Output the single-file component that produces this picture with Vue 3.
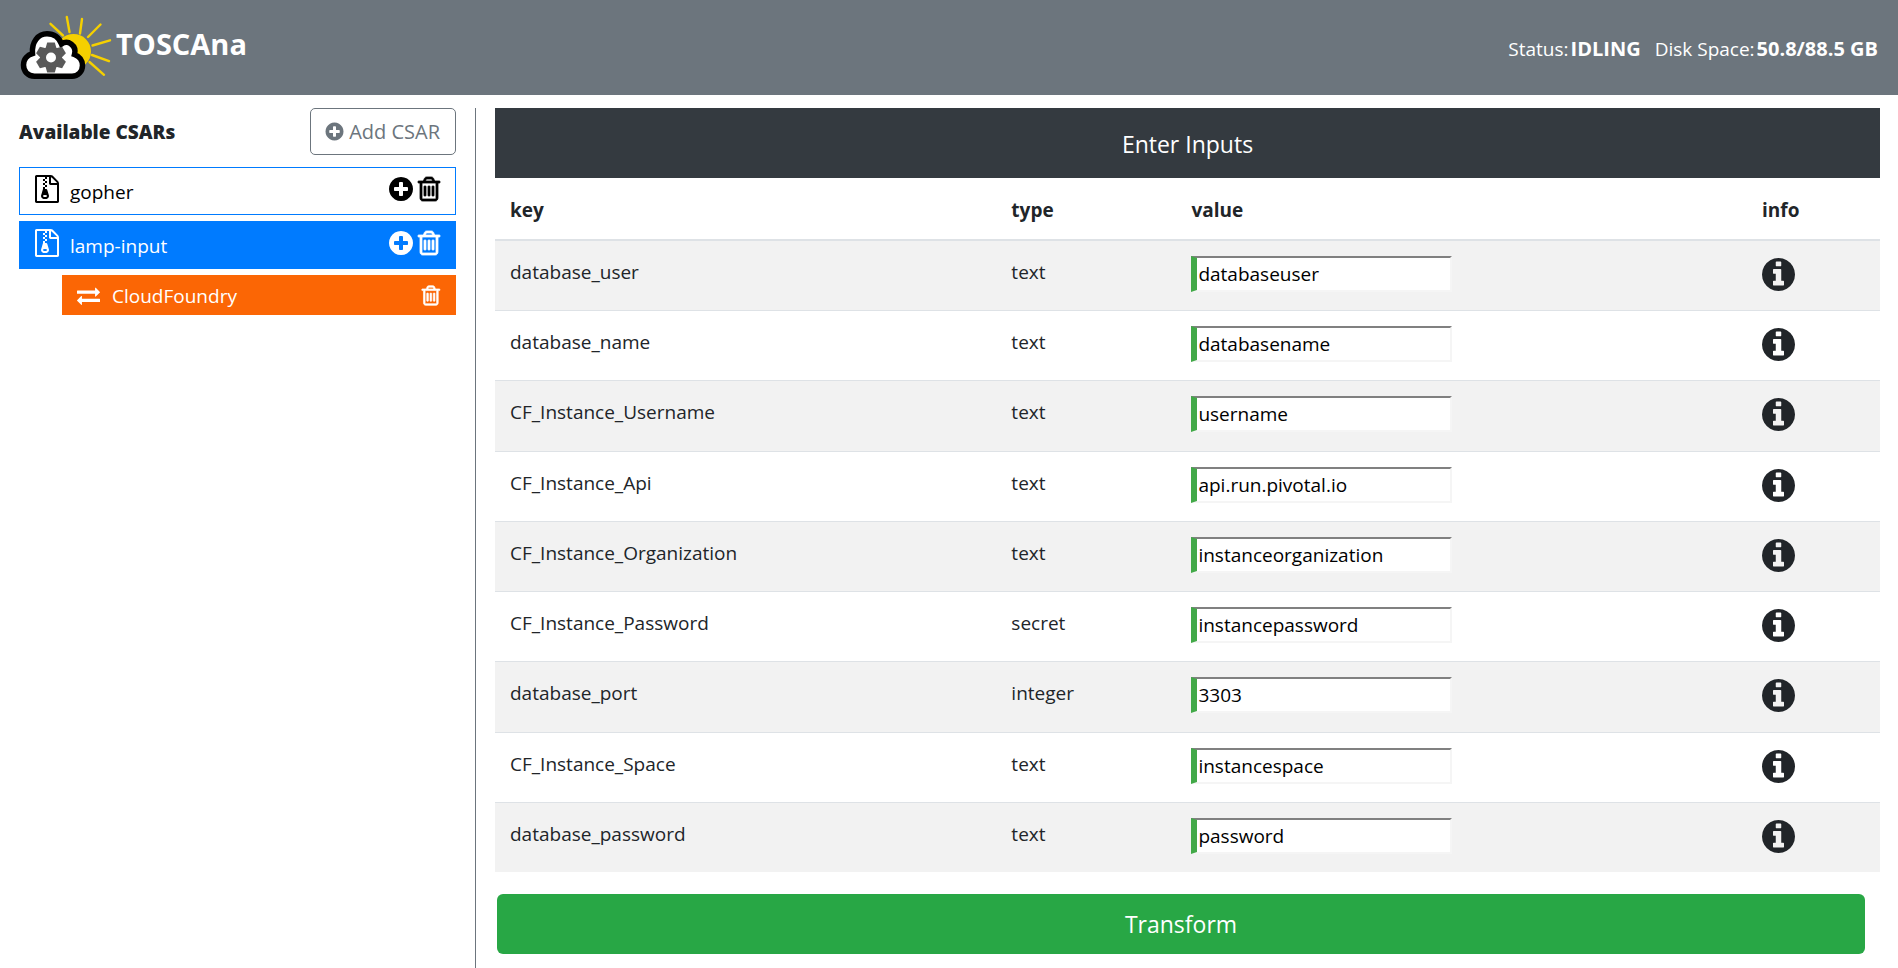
<script setup>
import { ref } from 'vue'

const icons = {
  plus: 'M1344 960v-128q0-26-19-45t-45-19h-256v-256q0-26-19-45t-45-19h-128q-26 0-45 19t-19 45v256h-256q-26 0-45 19t-19 45v128q0 26 19 45t45 19h256v256q0 26 19 45t45 19h128q26 0 45-19t19-45v-256h256q26 0 45-19t19-45zm320-64q0 209-103 385.5t-279.5 279.5-385.5 103-385.5-103-279.5-279.5-103-385.5 103-385.5 279.5-279.5 385.5-103 385.5 103 279.5 279.5 103 385.5z',
  info: 'M1152 1376v-160q0-14-9-23t-23-9h-96v-512q0-14-9-23t-23-9h-320q-14 0-23 9t-9 23v160q0 14 9 23t23 9h96v320h-96q-14 0-23 9t-9 23v160q0 14 9 23t23 9h448q14 0 23-9t9-23zm-128-896v-160q0-14-9-23t-23-9h-192q-14 0-23 9t-9 23v160q0 14 9 23t23 9h192q14 0 23-9t9-23zm640 416q0 209-103 385.5t-279.5 279.5-385.5 103-385.5-103-279.5-279.5-103-385.5 103-385.5 279.5-279.5 385.5-103 385.5 103 279.5 279.5 103 385.5z',
  trash: 'M704 736v576q0 14-9 23t-23 9h-64q-14 0-23-9t-9-23v-576q0-14 9-23t23-9h64q14 0 23 9t9 23zm256 0v576q0 14-9 23t-23 9h-64q-14 0-23-9t-9-23v-576q0-14 9-23t23-9h64q14 0 23 9t9 23zm256 0v576q0 14-9 23t-23 9h-64q-14 0-23-9t-9-23v-576q0-14 9-23t23-9h64q14 0 23 9t9 23zm128 724v-948h-896v948q0 22 7 40.5t14.5 27 10.5 8.5h832q3 0 10.5-8.5t14.5-27 7-40.5zm-672-1076h448l-48-117q-7-9-17-11h-317q-10 2-17 11zm928 32v64q0 14-9 23t-23 9h-96v948q0 83-47 143.5t-113 60.5h-832q-66 0-113-58.5t-47-141.5v-952h-96q-14 0-23-9t-9-23v-64q0-14 9-23t23-9h309l70-167q15-37 54-63t79-26h320q40 0 79 26t54 63l70 167h309q14 0 23 9t9 23z',
  archive: 'M768 384v-128h-128v128h128zm128 128v-128h-128v128h128zm-128 128v-128h-128v128h128zm128 128v-128h-128v128h128zm700-388q28 28 48 76t20 88v1152q0 40-28 68t-68 28h-1344q-40 0-68-28t-28-68v-1600q0-40 28-68t68-28h896q40 0 88 20t76 48zm-444-244v376h376q-10-29-22-41l-313-313q-12-12-41-22zm384 1528v-1024h-416q-40 0-68-28t-28-68v-416h-128v128h-128v-128h-512v1536h1280zm-627-721l107 349q8 27 8 52 0 83-72.5 137.5t-183.5 54.5-183.5-54.5-72.5-137.5q0-25 8-52 21-63 120-396v-128h128v128h79q22 0 39 13t23 34zm-141 465q53 0 90.5-19t37.5-45-37.5-45-90.5-19-90.5 19-37.5 45 37.5 45 90.5 19z',
  exchange: 'M1792 1184v192q0 13-9.5 22.5t-22.5 9.5h-1376v192q0 13-9.5 22.5t-22.5 9.5q-12 0-24-10l-319-320q-9-9-9-22 0-14 9-23l320-320q9-9 23-9 13 0 22.5 9.5t9.5 22.5v192h1376q13 0 22.5 9.5t9.5 22.5zm0-544q0 14-9 23l-320 320q-9 9-23 9-13 0-22.5-9.5t-9.5-22.5v-192h-1376q-13 0-22.5-9.5t-9.5-22.5v-192q0-13 9.5-22.5t22.5-9.5h1376v-192q0-14 9-23t23-9q12 0 24 10l319 319q9 9 9 23z'
}

const csars = [
  { name: 'gopher', active: false, platforms: [] },
  { name: 'lamp-input', active: true, platforms: ['CloudFoundry'] }
]

const inputs = ref([
  { key: 'database_user', type: 'text', value: 'databaseuser' },
  { key: 'database_name', type: 'text', value: 'databasename' },
  { key: 'CF_Instance_Username', type: 'text', value: 'username' },
  { key: 'CF_Instance_Api', type: 'text', value: 'api.run.pivotal.io' },
  { key: 'CF_Instance_Organization', type: 'text', value: 'instanceorganization' },
  { key: 'CF_Instance_Password', type: 'secret', value: 'instancepassword' },
  { key: 'database_port', type: 'integer', value: '3303' },
  { key: 'CF_Instance_Space', type: 'text', value: 'instancespace' },
  { key: 'database_password', type: 'text', value: 'password' }
])
</script>

<template>
  <div class="page">
    <header class="navbar">
      <a class="brand" href="#">
        <svg class="logo" viewBox="0 0 92 68" aria-hidden="true">
          <g stroke="#f5d000" stroke-width="2.4" stroke-linecap="round">
            <path d="M30.500 9.800L43 21.500M46.800 3L49.500 18M62 5L60 19.500M80.500 10.500L68 23M90 26.300L72.500 31.500M89 47.200L72 41M84 60.800L69.500 48" />
          </g>
          <circle cx="53.500" cy="37.500" r="17.500" fill="#f5d000" />
          <path d="M14.500 62.200C7.500 62.200 3.500 57 3.500 51C3.500 45 7.500 41 12.500 39.500C11.500 28 18 19.800 27 19.800C34 19.800 39 23.500 41.500 30C48 25.500 57 31.500 54.500 40.500C59.500 42.500 62.500 46.500 62.500 51.500C62.500 57.500 58 62.200 52 62.200Z" fill="#fff" stroke="#000" stroke-width="5.500" />
          <g transform="translate(31 43.500)">
            <g fill="#595959">
              <circle r="11" />
              <path v-for="n in 6" :key="n" :transform="`rotate(${n * 60})`" d="M-5.500 -9L-3.800 -15H3.800L5.500 -9Z" />
            </g>
            <circle r="5" fill="#fff" />
          </g>
        </svg>
        <span>TOSCAna</span>
      </a>
      <div class="status">
        <span>Status:<b>IDLING</b></span>
        <span>Disk Space:<b>50.8/88.5 GB</b></span>
      </div>
    </header>

    <div class="columns">
      <aside class="sidebar">
        <div class="sidebar-head">
          <h1>Available CSARs</h1>
          <button class="add" type="button">
            <svg class="icon-add" viewBox="0 0 1792 1792" aria-hidden="true"><path :d="icons.plus" /></svg>
            Add CSAR
          </button>
        </div>
        <ul class="list">
          <li v-for="csar in csars" :key="csar.name">
            <div class="csar" :class="{ active: csar.active }">
              <svg class="icon" viewBox="0 0 1792 1792" aria-hidden="true"><path :d="icons.archive" /></svg>
              <a class="name" href="#">{{ csar.name }}</a>
              <button type="button" :aria-label="`Add transformation to ${csar.name}`">
                <svg class="icon" viewBox="128 0 1536 1792" aria-hidden="true"><path :d="icons.plus" /></svg>
              </button>
              <button type="button" :aria-label="`Delete ${csar.name}`">
                <svg class="icon trash" viewBox="128 0 1536 1792" aria-hidden="true"><path :d="icons.trash" /></svg>
              </button>
            </div>
            <div v-for="platform in csar.platforms" :key="platform" class="platform">
              <svg class="icon-small" viewBox="0 0 1792 1792" aria-hidden="true"><path :d="icons.exchange" /></svg>
              <a class="name" href="#">{{ platform }}</a>
              <button type="button" :aria-label="`Delete ${platform}`">
                <svg class="icon-small trash" viewBox="128 0 1536 1792" aria-hidden="true"><path :d="icons.trash" /></svg>
              </button>
            </div>
          </li>
        </ul>
      </aside>

      <main class="content">
        <h2>Enter Inputs</h2>
        <table>
          <thead>
            <tr>
              <th class="col-key">key</th>
              <th class="col-type">type</th>
              <th class="col-value">value</th>
              <th>info</th>
            </tr>
          </thead>
          <tbody>
            <tr v-for="row in inputs" :key="row.key">
              <td><label :for="row.key">{{ row.key }}</label></td>
              <td>{{ row.type }}</td>
              <td><input :id="row.key" v-model="row.value" type="text"></td>
              <td>
                <button class="info" type="button" :aria-label="`About ${row.key}`">
                  <svg viewBox="128 128 1536 1536" aria-hidden="true"><path :d="icons.info" /></svg>
                </button>
              </td>
            </tr>
          </tbody>
        </table>
        <button class="transform" type="button">Transform</button>
      </main>
    </div>
  </div>
</template>

<style>
body {
  margin: 0;
  background: #fff;
}
</style>

<style scoped>
.page {
  display: flex;
  flex-direction: column;
  min-height: 100vh;
  color: #212529;
  font-family: "Open Sans", "Noto Sans", sans-serif;
  font-size: 19px;
  line-height: 32px;
}

.page * {
  box-sizing: border-box;
}

button {
  font: inherit;
  color: inherit;
  background: none;
  border: 0;
  padding: 0;
  cursor: pointer;
}

a {
  color: inherit;
  text-decoration: none;
}

svg {
  display: block;
  flex: none;
  fill: currentColor;
}

.navbar {
  display: flex;
  align-items: center;
  justify-content: space-between;
  height: 95px;
  padding: 0 20px;
  background: #6c757d;
  color: #fff;
}

.brand {
  display: flex;
  gap: 4px;
  font-size: 29px;
  font-weight: 700;
  line-height: 60px;
}

.logo {
  width: 92px;
  height: 68px;
}

.status {
  display: flex;
  gap: 14px;
  padding-top: 2px;
}

.status b {
  margin-left: 2px;
  font-size: 20px;
}

.columns {
  display: flex;
  flex: 1;
  padding-top: 13px;
}

.sidebar {
  flex: none;
  width: 476px;
  padding: 0 19px;
  border-right: 1px solid #6c757d;
}

.sidebar-head {
  display: flex;
  align-items: center;
  justify-content: space-between;
  margin-bottom: 12px;
}

h1 {
  margin: 0;
  font-size: 19px;
  font-weight: 800;
}

.add {
  display: flex;
  align-items: center;
  gap: 4px;
  height: 47px;
  padding: 0 15px 0 13px;
  border: 1px solid #6c757d;
  border-radius: 5px;
  color: #6c757d;
  font-size: 20px;
}

.icon-add {
  width: 21px;
  height: 21px;
}

.list {
  margin: 0;
  padding: 0;
  list-style: none;
}

.csar,
.platform {
  display: flex;
  align-items: center;
  margin-bottom: 6px;
}

.csar {
  height: 48px;
  padding: 0 14px 0 13px;
  border: 1px solid #007bff;
  color: #000;
}

.csar button {
  margin-left: 4px;
  padding-bottom: 4px;
}

.csar > svg {
  margin-bottom: 4px;
}

.csar.active {
  background: #007bff;
  color: #fff;
}

.platform {
  height: 40px;
  margin-left: 43px;
  padding: 0 15px;
  background: #fb6605;
  color: #fff;
}

.name {
  flex: 1;
  padding: 2px 0 0 9px;
}

.platform .name {
  padding-left: 12px;
}

.icon {
  height: 28px;
}

.icon-small {
  height: 23px;
}

.trash {
  stroke: currentColor;
  stroke-width: 50;
}

.content {
  display: grid;
  flex: 1;
  grid-template-rows: auto 1fr auto;
  padding: 0 18px 14px 19px;
}

h2 {
  margin: 0;
  padding: 20px 0 18px;
  background: #343a40;
  color: #fff;
  font-size: 23px;
  font-weight: 400;
  text-align: center;
}

table {
  width: 100%;
  border-collapse: collapse;
  table-layout: fixed;
}

th {
  height: 62px;
  padding: 15px 15px 13px;
  border-bottom: 2px solid #dee2e6;
  text-align: left;
  font-weight: 700;
}

td {
  padding: 15px 15px 18px;
  border-top: 1px solid #dee2e6;
  vertical-align: top;
}

tbody tr:nth-child(odd) {
  background: #f2f2f2;
}

.col-key {
  width: 36.2%;
}

.col-type {
  width: 13%;
}

.col-value {
  width: 41.2%;
}

input {
  display: block;
  width: 261px;
  height: 36px;
  padding: 1px;
  border: 2px solid;
  border-color: #808080 #f5f5f5 #f5f5f5 #42a948;
  border-left-width: 6px;
  background: #fff;
  color: #000;
  font: inherit;
}

.info {
  display: block;
  padding-top: 2px;
}

.info svg {
  width: 33px;
  height: 33px;
}

.transform {
  height: 60px;
  margin: 22px 15px 0 2px;
  border-radius: 6px;
  background: #28a745;
  color: #fff;
  font-size: 23px;
}
</style>
